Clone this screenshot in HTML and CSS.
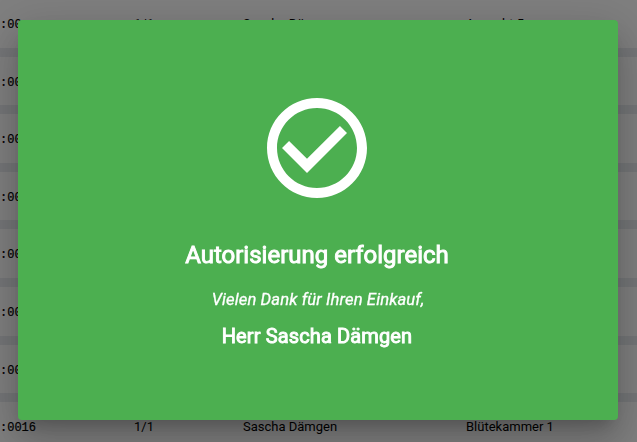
FILE: index.html
```
<!DOCTYPE html>
<html lang="de">
<head>
<meta charset="utf-8">
<title>Autorisierung</title>
<link rel="stylesheet" href="styles.css">
</head>
<body>
<main class="orders">
  <div class="row"><span class="time">:00</span><span>1/1</span><span>Sascha Dämgen</span><span>Anzucht 5</span></div>
  <div class="row"><span class="time">:00</span></div>
  <div class="row"><span class="time">:00</span></div>
  <div class="row"><span class="time">:00</span></div>
  <div class="row"><span class="time">:00</span></div>
  <div class="row"><span class="time">:00</span></div>
  <div class="row"><span class="time">:00</span></div>
  <div class="row"><span class="time">:0016</span><span>1/1</span><span>Sascha Dämgen</span><span>Blütekammer 1</span></div>
</main>
<div class="overlay">
  <section class="dialog" role="dialog">
    <svg class="icon" viewBox="0 0 24 24" aria-hidden="true"><path d="M12 2C6.48 2 2 6.48 2 12s4.48 10 10 10 10-4.48 10-10S17.52 2 12 2zm0 18c-4.41 0-8-3.59-8-8s3.59-8 8-8 8 3.59 8 8-3.59 8-8 8zm4.59-12.42L10 14.17l-3.59-3.58L5 12l5 5 8-8z"/></svg>
    <h1 class="title">Autorisierung erfolgreich</h1>
    <p class="thanks">Vielen Dank für Ihren Einkauf,</p>
    <p class="customer">Herr Sascha Dämgen</p>
  </section>
</div>
</body>
</html>
```
FILE: styles.css
```
* { box-sizing: border-box; }
body {
  margin: 0;
  height: 442px;
  overflow: hidden;
  background: #e9ecf0;
  font-family: Roboto, "Liberation Sans", sans-serif;
}
.orders {
  display: grid;
  gap: 9px;
  margin-top: -1px;
}
.row {
  display: grid;
  grid-template-columns: 134px 109px 223px 1fr;
  align-items: center;
  height: 48.6px;
  background: #fff;
  color: #000;
  font-size: 13px;
}
.time {
  padding-top: 3.4px;
  font-family: "Liberation Mono", monospace;
  font-size: 12px;
  -webkit-text-stroke: 0.2px #000;
}
.overlay {
  position: fixed;
  inset: 0;
  padding: 20px 19px 22px 18px;
  background: rgba(0, 0, 0, 0.5);
}
.dialog {
  display: flex;
  flex-direction: column;
  align-items: center;
  height: 400px;
  padding: 68px 2px 0 0;
  border-radius: 4px;
  background: #4caf50;
  color: #fff;
  box-shadow: 0 11px 15px -7px rgba(0, 0, 0, 0.2), 0 24px 38px 3px rgba(0, 0, 0, 0.14), 0 9px 46px 8px rgba(0, 0, 0, 0.12);
}
.icon {
  width: 120px;
  height: 120px;
  fill: currentColor;
}
.title {
  margin: 31px 0 0;
  font-size: 24px;
  line-height: 32px;
  font-weight: 400;
  -webkit-text-stroke: 0.9px #fff;
}
.thanks {
  margin: 17px 0 0;
  padding-left: 2px;
  font-size: 16.6px;
  line-height: 24px;
  font-style: italic;
  letter-spacing: 0.12px;
  -webkit-text-stroke: 0.3px #fff;
}
.customer {
  margin: 11px 0 0;
  font-size: 20px;
  line-height: 26px;
  letter-spacing: 0.13px;
  -webkit-text-stroke: 0.9px #fff;
}
```
